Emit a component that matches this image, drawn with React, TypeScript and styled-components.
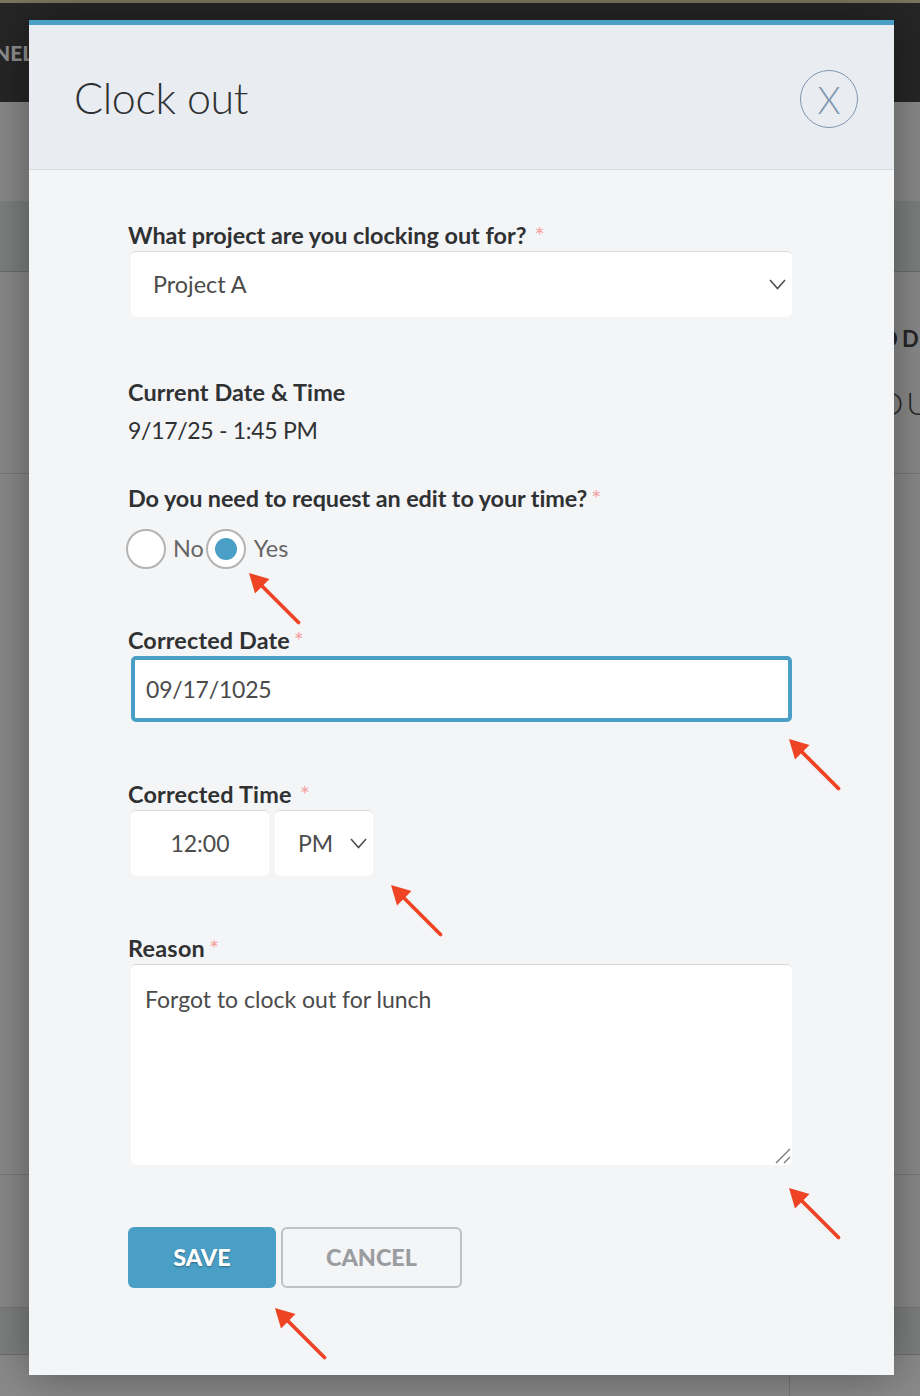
import React from "react";
import styled, { createGlobalStyle } from "styled-components";

const Global = createGlobalStyle`
  html, body { margin: 0; padding: 0; }
  body { width: 920px; height: 1396px; overflow: hidden; font-family: "Lato", "Liberation Sans", sans-serif; background: #8a8a8a; }
`;

const Page = styled.div`
  position: relative;
  width: 920px;
  height: 1396px;
  overflow: hidden;
  background: #8a8a8a;
`;
const TopStrip = styled.div`
  height: 3px;
  background: #7a775c;
`;
const NavBar = styled.div`
  height: 99px;
  background: #262626;
  display: flex;
  align-items: center;
  padding-bottom: 1px;
  box-sizing: border-box;
  overflow: hidden;
  color: #8f8f8f;
  font-weight: 900;
  font-size: 21px;
`;
const NavText = styled.span`
  margin-left: -6px;
`;
const Band = styled.div<{ $h: number; $line?: boolean; $shade?: boolean }>`
  height: ${(p) => p.$h}px;
  background: ${(p) => (p.$shade ? "rgba(40,50,50,.12)" : "transparent")};
  border-bottom: ${(p) => (p.$line ? "1px solid rgba(0,0,0,.14)" : "none")};
  box-sizing: border-box;
`;
const BottomBand = styled.div`
  height: 41px;
  width: 790px;
  border-right: 1px solid rgba(0,0,0,.14);
  box-sizing: border-box;
`;
const SideBold = styled.div`
  position: absolute;
  left: 880px;
  top: 325px;
  font-size: 22px;
  line-height: 28px;
  font-weight: 700;
  word-spacing: -1px;
  color: #262626;
  white-space: nowrap;
`;
const SideLight = styled.div`
  position: absolute;
  left: 878px;
  top: 383px;
  font-size: 32px;
  line-height: 40px;
  font-weight: 300;
  letter-spacing: 3px;
  color: #262626;
  white-space: nowrap;
`;

const Modal = styled.div`
  position: absolute;
  left: 29px;
  top: 20px;
  width: 865px;
  height: 1355px;
  background: #f4f5f7;
  border-top: 5px solid #4a9fc6;
  box-sizing: border-box;
  box-shadow: 0 0 45px rgba(0, 0, 0, 0.38);
`;
const Header = styled.header`
  height: 145px;
  box-sizing: border-box;
  background: #e9ecf1;
  border-bottom: 1px solid #d8dbe1;
  display: flex;
  align-items: center;
  justify-content: space-between;
  padding: 4px 36px 0 46px;
`;
const Title = styled.h1`
  margin: -4px 0 0 -1px;
  font-size: 43px;
  font-weight: 300;
  color: #2f3133;
  letter-spacing: -0.35px;
`;
const CloseButton = styled.button`
  width: 58px;
  height: 58px;
  border-radius: 50%;
  border: 1px solid #7f97b0;
  background: transparent;
  color: #7f97b0;
  font: 300 37px "Lato", sans-serif;
  padding: 0;
`;
const Body = styled.div`
  padding: 51px 0 0 99px;
  width: 665px;
  display: flex;
  flex-direction: column;
`;
const Label = styled.div<{ $track?: number }>`
  font-size: 23.4px;
  font-weight: 700;
  color: #2f3133;
  line-height: 28px;
  letter-spacing: ${(p) => p.$track ?? 0}px;
  white-space: nowrap;
`;
const Star = styled.span<{ $gap: number }>`
  color: #f5a3a3;
  font-weight: 400;
  font-size: 24px;
  line-height: 0;
  margin-left: ${(p) => p.$gap}px;
`;
const Field = styled.div<{ $h: number; $w?: number }>`
  position: relative;
  box-sizing: border-box;
  height: ${(p) => p.$h}px;
  width: ${(p) => p.$w ?? 661}px;
  padding-bottom: 2px;
  background: #fff;
  border-top: 1px solid #d8d8d8;
  border-radius: 5px;
  display: flex;
  align-items: center;
  font-size: 23px;
  color: #4b4b4b;
`;
const FieldRow = styled.div`
  display: flex;
  gap: 6px;
  margin: 2px 0 0 3px;
`;
const Select = styled(Field)`
  margin: 2px 0 0 3px;
  padding-left: 22px;
  font-size: 23.4px;
`;
const Chevron = styled.svg`
  position: absolute;
  right: 6px;
  top: 27px;
  width: 17px;
  height: 11px;
  fill: none;
  stroke: #4b4b4b;
  stroke-width: 1.5;
`;
const Value = styled.div`
  font-size: 23px;
  letter-spacing: -0.3px;
  color: #2f3133;
  line-height: 28px;
  margin-top: 10px;
`;
const RadioRow = styled.div`
  display: flex;
  align-items: center;
  margin: 17px 0 0 -2px;
`;
const Radio = styled.span<{ $on?: boolean }>`
  box-sizing: border-box;
  width: 40px;
  height: 40px;
  border-radius: 50%;
  border: 2px solid #b3b3b3;
  background: #fff;
  display: flex;
  align-items: center;
  justify-content: center;
  &::after {
    content: "";
    display: ${(p) => (p.$on ? "block" : "none")};
    width: 22px;
    height: 22px;
    border-radius: 50%;
    background: #4a9fc6;
  }
`;
const RadioText = styled.span<{ $gap: number; $end?: number }>`
  font-size: 23.4px;
  color: #666;
  margin: 0 ${(p) => p.$end ?? 0}px 2px ${(p) => p.$gap}px;
`;
const DateInput = styled.div`
  box-sizing: border-box;
  margin: 2px 0 0 3px;
  width: 661px;
  height: 66px;
  border: 4px solid #4a9fc6;
  border-radius: 5px;
  background: #fff;
  display: flex;
  align-items: center;
  padding-left: 11px;
  font-size: 23px;
  letter-spacing: -0.2px;
  color: #4b4b4b;
`;
const TimeField = styled(Field)`
  justify-content: center;
`;
const PeriodField = styled(Field)`
  padding-left: 23px;
`;
const ReasonArea = styled(Field)`
  margin: 2px 0 0 3px;
  align-items: flex-start;
  padding: 20px 0 0 14px;
  line-height: 28px;
`;
const Grip = styled.svg`
  position: absolute;
  right: 1px;
  bottom: 1px;
  width: 16px;
  height: 16px;
  stroke: #777;
  stroke-width: 1.3;
`;
const Buttons = styled.div`
  display: flex;
  gap: 5px;
  margin-top: 62px;
`;
const SaveButton = styled.button`
  box-sizing: border-box;
  width: 148px;
  height: 61px;
  border: 0;
  border-radius: 6px;
  padding: 0 0 2px;
  background: #4a9fc6;
  color: #fff;
  font: 900 23.4px "Lato", sans-serif;
  text-shadow: 0 1px 2px rgba(0,0,0,.35);
`;
const CancelButton = styled.button`
  box-sizing: border-box;
  width: 181px;
  height: 61px;
  border: 2px solid #c0c1c4;
  border-radius: 6px;
  padding: 0 0 2px;
  background: transparent;
  color: #9b9c9f;
  font: 900 23.4px "Lato", sans-serif;
`;
const Gap = styled.div<{ $h: number }>`
  height: ${(p) => p.$h}px;
`;
const Arrow = styled.svg<{ $x: number; $y: number }>`
  position: absolute;
  left: ${(p) => p.$x}px;
  top: ${(p) => p.$y}px;
  width: 52px;
  height: 52px;
  overflow: visible;
`;

const RedArrow = ({ x, y }: { x: number; y: number }) => (
  <Arrow $x={x} $y={y} viewBox="0 0 52 52">
    <path d="M49.5 49.5 L12 12" stroke="#ee4423" strokeWidth="3.8" strokeLinecap="round" fill="none" />
    <path d="M0 0 L20.5 6 L6 20.5 Z" fill="#ee4423" />
  </Arrow>
);

export default function App() {
  return (
    <Page>
      <Global />
      <TopStrip />
      <NavBar><NavText>NEL</NavText></NavBar>
      <Band $h={99} />
      <Band $h={71} $line $shade />
      <Band $h={202} $line />
      <Band $h={701} $line />
      <Band $h={133} $line />
      <Band $h={47} $line $shade />
      <BottomBand />
      <SideBold>O D</SideBold>
      <SideLight>OU</SideLight>
      <Modal>
        <Header>
          <Title>Clock out</Title>
          <CloseButton>X</CloseButton>
        </Header>
        <Body>
          <Label>What project are you clocking out for?<Star $gap={8}>*</Star></Label>
          <Select $h={66}>
            Project A
            <Chevron viewBox="0 0 17 11"><path d="M1 1 L8.5 9.5 L16 1" /></Chevron>
          </Select>
          <Gap $h={61} />
          <Label $track={0.11}>Current Date &amp; Time</Label>
          <Value>9/17/25 - 1:45 PM</Value>
          <Gap $h={40} />
          <Label $track={-0.09}>Do you need to request an edit to your time?<Star $gap={4}>*</Star></Label>
          <RadioRow>
            <Radio />
            <RadioText $gap={7} $end={2}>No</RadioText>
            <Radio $on />
            <RadioText $gap={8}>Yes</RadioText>
          </RadioRow>
          <Gap $h={57} />
          <Label $track={0.14}>Corrected Date<Star $gap={4}>*</Star></Label>
          <DateInput>09/17/1025</DateInput>
          <Gap $h={58} />
          <Label $track={0.2}>Corrected Time<Star $gap={8}>*</Star></Label>
          <FieldRow>
            <TimeField $h={66} $w={138}>12:00</TimeField>
            <PeriodField $h={66} $w={98}>
              PM
              <Chevron viewBox="0 0 17 11"><path d="M1 1 L8.5 9.5 L16 1" /></Chevron>
            </PeriodField>
          </FieldRow>
          <Gap $h={58} />
          <Label $track={0.25}>Reason<Star $gap={4}>*</Star></Label>
          <ReasonArea $h={201}>
            Forgot to clock out for lunch
            <Grip viewBox="0 0 16 16"><path d="M1 15 L15 1 M9 15 L15 9" /></Grip>
          </ReasonArea>
          <Buttons>
            <SaveButton>SAVE</SaveButton>
            <CancelButton>CANCEL</CancelButton>
          </Buttons>
        </Body>
      </Modal>
      <RedArrow x={249} y={573} />
      <RedArrow x={789} y={739} />
      <RedArrow x={391} y={885} />
      <RedArrow x={789} y={1188} />
      <RedArrow x={275} y={1308} />
    </Page>
  );
}
